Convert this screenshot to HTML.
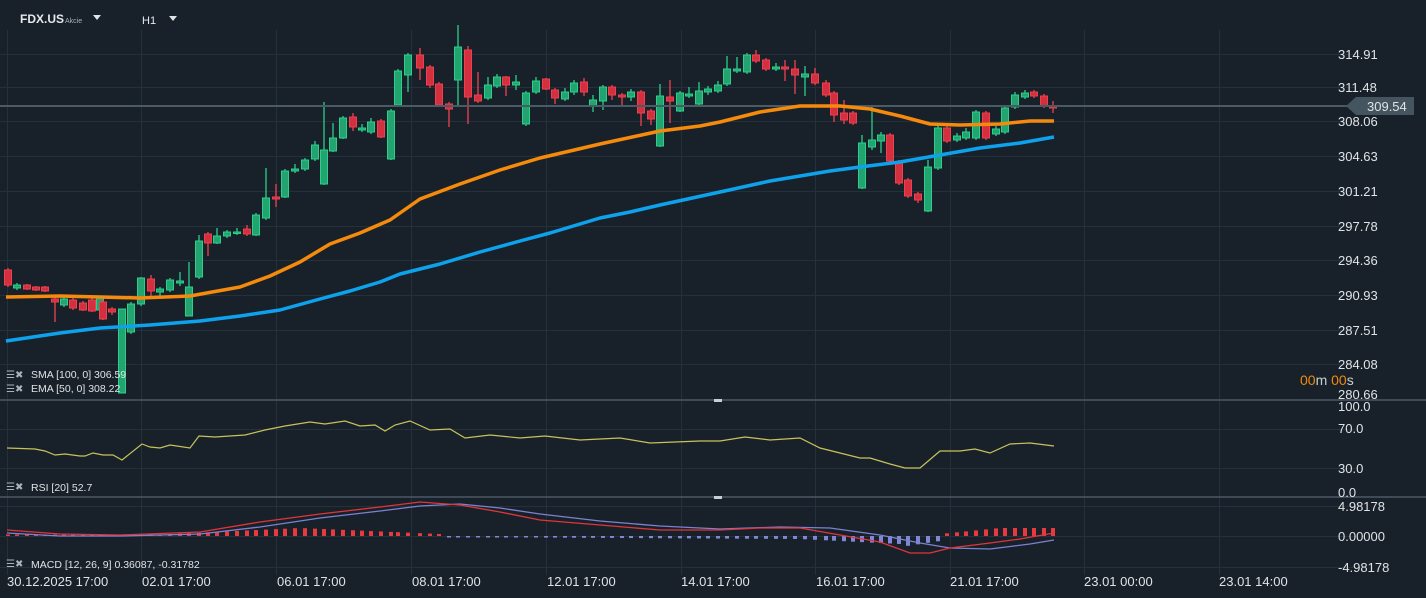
<!DOCTYPE html>
<html><head><meta charset="utf-8"><style>
html,body{margin:0;padding:0;background:#18212a;width:1426px;height:598px;overflow:hidden}
svg{display:block;font-family:"Liberation Sans",sans-serif}
</style></head><body>
<svg id="s" width="1426" height="598" xmlns="http://www.w3.org/2000/svg">
<rect width="1426" height="598" fill="#18212a"/>
<g id="grid" stroke="#25313a" stroke-width="1"></g>
<g id="cand"></g>
<line x1="0" y1="106" x2="1356" y2="106" stroke="#4b5b66" stroke-width="2"/>
<polyline id="ema" fill="none" stroke="#f58a0c" stroke-width="3.5" stroke-linejoin="round"/>
<polyline id="sma" fill="none" stroke="#0ea2ec" stroke-width="3.5" stroke-linejoin="round"/>
<polyline id="rsi" fill="none" stroke="#c8c25a" stroke-width="1.2"/>
<g id="hist"></g>
<polyline id="mb" fill="none" stroke="#7b82d0" stroke-width="1.3"/>
<polyline id="mr" fill="none" stroke="#e0353a" stroke-width="1.3"/>
<line x1="0" y1="400" x2="1426" y2="400" stroke="#4a5864" stroke-width="1.5"/>
<line x1="0" y1="497" x2="1426" y2="497" stroke="#4a5864" stroke-width="1.5"/>
<rect x="714" y="399" width="8" height="3" fill="#c8ced4"/>
<rect x="714" y="496" width="8" height="3" fill="#c8ced4"/>
<path d="M1346 106 L1356 97 L1414 97 L1414 115 L1356 115 Z" fill="#45555f"/>
<g fill="#dfe3e6" font-size="13">
<text x="1367" y="111">309.54</text>
<text x="1338" y="59">314.91</text><text x="1338" y="92">311.48</text><text x="1338" y="126">308.06</text>
<text x="1338" y="161">304.63</text><text x="1338" y="196">301.21</text><text x="1338" y="231">297.78</text>
<text x="1338" y="265">294.36</text><text x="1338" y="300">290.93</text><text x="1338" y="335">287.51</text>
<text x="1338" y="369">284.08</text><text x="1338" y="399">280.66</text>
<text x="1338" y="411">100.0</text><text x="1338" y="433">70.0</text><text x="1338" y="473">30.0</text><text x="1338" y="497">0.0</text>
<text x="1338" y="511">4.98178</text><text x="1338" y="541">0.00000</text><text x="1338" y="572">-4.98178</text>
<text x="7" y="586">30.12.2025  17:00</text><text x="142" y="586">02.01  17:00</text><text x="277" y="586">06.01  17:00</text>
<text x="412" y="586">08.01  17:00</text><text x="547" y="586">12.01  17:00</text><text x="681" y="586">14.01  17:00</text>
<text x="816" y="586">16.01  17:00</text><text x="950" y="586">21.01  17:00</text><text x="1084" y="586">23.01  00:00</text>
<text x="1219" y="586">23.01  14:00</text>
</g>
<text x="1300" y="385" font-size="14"><tspan fill="#f08a0c">00</tspan><tspan fill="#c8ced4">m </tspan><tspan fill="#f08a0c">00</tspan><tspan fill="#c8ced4">s</tspan></text>
<g fill="#dfe3e6" font-size="10.5">
<text x="31" y="378">SMA [100,  0] 306.59</text>
<text x="31" y="392">EMA [50,  0] 308.22</text>
<text x="31" y="491">RSI [20]  52.7</text>
<text x="31" y="568">MACD [12, 26, 9] 0.36087, -0.31782</text>
</g>
<g fill="#aab2b8" font-size="10">
<text x="6" y="378">☰✖</text><text x="6" y="392">☰✖</text><text x="6" y="490">☰✖</text><text x="6" y="567">☰✖</text>
</g>
<text x="20" y="23" fill="#e6e9ec" font-size="12" font-weight="bold">FDX.US</text>
<text x="65" y="23" fill="#aab2b8" font-size="7">Akcie</text>
<path d="M93 15 L101 15 L97 20 Z" fill="#dfe3e6"/>
<text x="142" y="24" fill="#e6e9ec" font-size="11">H1</text>
<path d="M169 16 L177 16 L173 21 Z" fill="#dfe3e6"/>
</svg>
<script>
var NS="http://www.w3.org/2000/svg";
function el(p,t,a){var e=document.createElementNS(NS,t);for(var k in a)e.setAttribute(k,a[k]);p.appendChild(e);return e;}
var g=document.getElementById('grid');
[7,141,276,411,546,681,815,950,1084,1219].forEach(function(x){el(g,'line',{x1:x+.5,y1:30,x2:x+.5,y2:575});});
[54,87,121,156,191,226,260,295,330,364,429,468,506,536,567].forEach(function(y){el(g,'line',{x1:0,y1:y+.5,x2:1356,y2:y+.5});});
// x, type(1 green,0 red), top, bottom, hi, lo
var C=[[8,0,270,285,268,287],[17,1,285,288,283,290],[27,0,285,289,284,290],[36,0,287,290,286,291],[45,0,287,291,286,292],[55,0,299,302,297,322],[64,1,299,305,297,307],[73,0,300,308,298,310],[83,0,303,310,301,311],[92,0,300,311,298,312],[100,1,298,310,296,312],
[103,0,302,319,300,320],[112,0,309,312,307,315],[122,1,309,393,309,393],[131,1,304,332,302,334],[141,1,278,304,277,306],[151,0,279,291,275,296],[160,1,289,292,287,296],[170,1,280,290,278,292],[180,1,281,283,272,286],[189,1,287,316,262,316],[199,1,241,277,235,279],[208,0,234,243,232,256],[217,1,236,243,228,244],[227,1,232,236,230,238],[237,1,232,233,228,235],[247,0,229,234,225,236],[256,1,215,235,213,236],[266,1,198,218,168,220],[276,0,197,199,184,207],[285,1,171,197,169,198],[295,1,169,171,164,173],[305,1,160,169,158,171],[315,1,145,159,141,161],[324,1,150,184,102,185],[333,1,138,151,123,152],[343,1,118,138,116,139],[353,0,117,127,113,131],[362,1,128,130,124,132],[371,1,122,132,118,134],[381,0,121,137,119,138],[391,1,111,159,109,160],
[398,1,71,105,69,107],[408,1,55,75,53,92],[420,0,55,68,48,80],[430,0,67,85,65,88],[439,0,84,105,82,107],[449,0,104,109,102,127],[458,1,47,80,25,106],[468,0,50,97,46,124],[478,0,95,101,72,103],[488,1,85,98,77,100],[497,1,77,86,74,88],[506,0,77,85,76,96],[516,1,82,85,75,90],[526,1,93,124,91,126],[536,1,81,92,77,94],[546,0,79,89,78,90],[555,0,90,98,88,104],[565,1,92,99,88,101],[574,1,83,92,80,95],[584,0,82,92,78,96],[593,1,100,106,95,112],
[603,1,87,101,85,110],[612,0,87,95,85,100],[622,0,95,97,93,106],[631,1,92,97,89,101],[641,0,92,113,90,126],[651,0,111,119,109,125],[660,1,96,146,84,147],[670,0,97,101,80,123],[680,1,93,111,91,112],[689,1,94,96,87,98],[699,1,91,104,82,107],[708,1,89,92,86,95],[718,1,85,91,81,93],[727,1,69,84,56,86],[737,1,69,71,57,73],[747,1,55,72,53,74],[756,0,55,61,50,63],[766,0,60,69,58,71],[776,1,67,69,63,71],[785,0,67,69,60,81],[795,0,69,75,60,94],[805,1,74,77,66,96],[815,0,74,83,68,85],[826,0,83,95,80,97],[834,0,93,115,91,122],[844,0,113,120,100,124],[853,0,113,123,111,125],[862,1,143,188,135,189],[872,1,140,147,105,150],[881,1,135,141,132,153],[890,0,135,161,133,163],[899,0,162,183,160,185],
[908,0,180,196,178,198],[918,0,194,200,192,203],[928,1,167,211,160,212],[938,1,128,168,126,170],[947,0,128,141,126,143],[957,1,136,140,133,142],[966,1,132,138,128,140],[976,1,112,138,110,140],[986,0,113,138,111,140],[996,1,129,134,126,136],[1005,1,108,132,105,134],[1015,1,95,107,92,109],[1025,1,93,97,90,99],[1034,0,92,96,90,98],[1044,0,96,106,94,108],[1053,0,106,108,101,113]];
var cg=document.getElementById('cand');
C.forEach(function(c){var col=c[1]?'#2bd08a':'#f0404f',fill=c[1]?'#22a370':'#d2303f';
el(cg,'line',{x1:c[0],y1:c[4],x2:c[0],y2:c[5],stroke:col,'stroke-width':1.3});
el(cg,'rect',{x:c[0]-3.5,y:c[2],width:7,height:Math.max(1.5,c[3]-c[2]),fill:fill,stroke:col,'stroke-width':1});});
function pts(a){return a.map(function(p){return p.join(',')}).join(' ');}
document.getElementById('ema').setAttribute('points',pts([[6,297],[60,296],[100,297],[140,298],[190,296],[240,287],[270,276],[300,262],[330,244],[360,233],[390,220],[420,199],[460,184],[500,170],[540,158],[570,151],[600,144],[660,131],[700,126],[720,122],[760,112],[800,106],[840,106],[870,109],[900,116],[930,124],[960,125],[1000,124],[1030,121],[1054,121]]));
document.getElementById('sma').setAttribute('points',pts([[6,341],[60,333],[100,328],[150,325],[200,321],[240,316],[280,310],[320,299],[350,291],[380,282],[400,274],[440,264],[480,252],[520,241],[550,233],[600,218],[630,212],[660,205],[720,192],[770,181],[800,176],[830,171],[860,167],[900,162],[940,155],[980,148],[1020,143],[1054,137]]));
document.getElementById('rsi').setAttribute('points',pts([[7,448],[35,449],[45,451],[55,455],[65,454],[80,456],[85,456],[93,453],[103,455],[113,455],[122,460],[142,444],[150,447],[160,448],[170,445],[190,448],[199,436],[215,437],[245,435],[265,430],[285,426],[310,422],[325,424],[345,421],[360,426],[375,425],[385,431],[395,425],[410,421],[430,430],[450,429],[465,438],[490,435],[520,438],[545,436],[580,440],[620,438],[650,443],[700,441],[720,441],[745,437],[770,440],[800,438],[820,448],[840,453],[860,458],[870,458],[880,461],[890,464],[905,468],[920,468],[940,451],[960,451],[975,449],[990,453],[1010,444],[1030,443],[1054,446]]));
document.getElementById('mr').setAttribute('points',pts([[7,530],[60,534],[120,535],[200,532],[260,522],[320,514],[380,507],[420,502],[460,505],[500,512],[540,520],[600,525],[660,530],[720,530],[760,528],[800,528],[840,535],[880,542],[910,553],[930,553],[950,548],[990,543],[1020,539],[1054,533]]));
document.getElementById('mb').setAttribute('points',pts([[7,533],[60,536],[120,536],[200,534],[260,527],[320,518],[380,511],[420,506],[460,504],[500,508],[540,514],[600,521],[660,526],[720,529],[780,527],[830,528],[880,535],[920,543],[950,548],[990,549],[1030,544],[1054,540]]));
var hg=document.getElementById('hist');
C.forEach(function(c){var x=c[0],h;
if(x<150)h=0.5;else if(x<300)h=(x-150)/150*7+1;else if(x<440)h=8-(x-300)/140*6;else if(x<800)h=-((x-440)/360*2+1);
else if(x<940)h=-(3+ (x<900?(x-800)/100*5:8-(x-900)/40*6));else h=Math.min(8,(x-940)/60*6+2);
var col=h>0?'#e8393f':'#8088d6';var hh=Math.max(1.5,Math.abs(h));
el(hg,'rect',{x:x-2,y:h>0?536-hh:536,width:4,height:hh,fill:col});});
</script>
</body></html>
